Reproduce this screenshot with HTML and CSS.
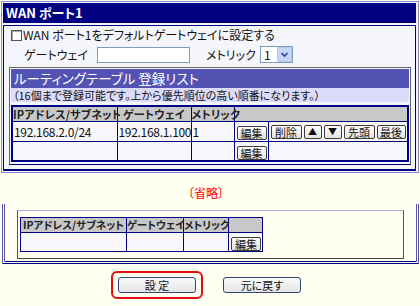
FILE: index.html
```html
<!DOCTYPE html>
<html lang="ja">
<head>
<meta charset="utf-8">
<link rel="stylesheet" href="styles.css">
</head>
<body>
<div class="frame">
  <div class="titlebar">WAN ポート1</div>
  <div class="panel">
    <div class="chkrow"><span class="cb"></span>WAN ポート1をデフォルトゲートウェイに設定する</div>
    <div class="gwrow">
      <span class="lbl">ゲートウェイ</span>
      <span class="input"></span>
      <span class="lbl2">メトリック</span>
      <span class="select"><span class="val">1</span><span class="arrow"><svg width="13" height="13" viewBox="0 0 13 13"><path d="M3.5 5 L6.5 8 L9.5 5" fill="none" stroke="#2a3f8a" stroke-width="1.6"/></svg></span></span>
    </div>
    <div class="rbox">
      <div class="rhead">ルーティングテーブル 登録リスト</div>
      <div class="rnote">（16個まで登録可能です。上から優先順位の高い順番になります。）</div>
      <table class="rt">
        <colgroup><col class="c1"><col class="c2"><col class="c3"><col class="c4"><col></colgroup>
        <tr class="hd"><th>IPアドレス/サブネット</th><th>ゲートウェイ</th><th>メトリック</th><th colspan="2"></th></tr>
        <tr class="r1"><td>192.168.2.0/24</td><td>192.168.1.100</td><td>1</td><td class="ed"><span class="btn">編集</span></td><td class="acts"><span class="btn w30">削除</span><span class="btn ar">▲</span><span class="btn ar">▼</span><span class="btn w30">先頭</span><span class="btn w28">最後</span></td></tr>
        <tr class="r2"><td></td><td></td><td></td><td class="ed"><span class="btn">編集</span></td><td></td></tr>
      </table>
    </div>
  </div>
</div>
<div class="omit">〔省略〕</div>
<div class="frame2">
  <div class="inner2">
    <table class="rt rt2">
      <colgroup><col class="d1"><col class="d2"><col class="d3"><col class="d4"></colgroup>
      <tr class="hd"><th>IPアドレス/サブネット</th><th>ゲートウェイ</th><th>メトリック</th><th></th></tr>
      <tr class="r2"><td></td><td></td><td></td><td class="ed"><span class="btn">編集</span></td></tr>
    </table>
  </div>
</div>
<div class="actions">
  <span class="hl"><span class="bbtn">設 定</span></span>
  <span class="bbtn">元に戻す</span>
</div>
</body>
</html>
```

FILE: styles.css
```css
* { box-sizing: border-box; }
html, body { margin: 0; padding: 0; }
body {
  width: 420px;
  height: 306px;
  overflow: hidden;
  background: #fffff2;
  font-family: "Noto Sans CJK JP", "Liberation Sans", sans-serif;
  font-size: 12px;
  color: #111;
  font-feature-settings: "palt";
}
.frame {
  margin: 1px 1px 0 1px;
  width: 418px;
  height: 172px;
  border: 1px solid #8a8ad0;
  background: #f5f5fc;
  padding: 1px;
  display: flex;
  flex-direction: column;
}
.titlebar {
  height: 20px;
  background: #000080;
  color: #fff;
  font-weight: bold;
  font-size: 13px;
  line-height: 20px;
  padding-left: 3px;
  margin-right: 1px;
}
.panel {
  margin-top: 2px;
  flex: 1;
  border: 1px solid #000080;
  border-bottom-width: 2px;
  margin-right: 1px;
  padding: 1px 4px 0 5px;
}
.chkrow {
  height: 16px;
  line-height: 16px;
  display: flex;
  align-items: center;
  padding-left: 2px;
}
.cb {
  width: 11px;
  height: 11px;
  border: 1px solid #555;
  background: #fff;
  box-shadow: inset 1px 1px 0 #aaa;
  margin-right: 1px;
}
.gwrow {
  margin-top: 3px;
  height: 17px;
  display: flex;
  align-items: center;
}
.lbl { margin-left: 15px; width: 73px; }
.input {
  width: 93px;
  height: 16px;
  border: 1px solid #7f9db9;
  background: #fff;
}
.lbl2 { margin-left: 16px; width: 54px; white-space: nowrap; }
.select {
  width: 33px;
  height: 17px;
  border: 1px solid #7f9db9;
  background: #fff;
  display: flex;
  align-items: center;
}
.select .val { flex: 1; padding-left: 3px; font-size: 12px; }
.arrow {
  width: 15px;
  height: 15px;
  background: #c6d5f7;
  border: 1px solid #b6c8f0;
  display: flex;
  align-items: center;
  justify-content: center;
}
.rbox {
  margin-top: 4px;
  border: 1px solid #666;
  border-bottom: 1px solid #000080;
  padding: 1px 1px 2px 1px;
  background: #f5f5fc;
}
.rhead {
  height: 19px;
  background: #5353b3;
  color: #fff;
  font-size: 13.5px;
  line-height: 19px;
  padding-left: 3px;
}
.rnote {
  height: 14px;
  background: #dcdcfa;
  font-size: 11px;
  line-height: 14px;
  padding-left: 2px;
}
.rt {
  margin-top: 3px;
  border-collapse: collapse;
  border: 2px solid #000080;
  width: 100%;
  table-layout: fixed;
  font-size: 12px;
}
.rt th, .rt td {
  border: 1px solid #000080;
  padding: 0 0 0 1px;
  text-align: left;
  white-space: nowrap;
}
.rt td { letter-spacing: -0.3px; }
.rt .hd th {
  background: #c8c8c8;
  font-weight: bold;
  height: 15px;
  font-size: 11px;
  letter-spacing: 0.2px;
  line-height: 14px;
  color: #222;
  text-align: center;
  padding: 0;
}
.c1 { width: 105px; }
.c2 { width: 74px; }
.c3 { width: 43px; }
.c4 { width: 34px; }
.rt td { background: #f8f8fc; }
.r1 td { height: 20px; }
.r2 td { height: 18px; }
.ed { padding-left: 2px !important; }
.acts { font-size: 0; padding-left: 0 !important; }
.acts .btn { margin-left: 2px; }
.btn {
  display: inline-flex;
  align-items: center;
  justify-content: center;
  vertical-align: middle;
  height: 14px;
  padding: 0 3px;
  border: 1px solid #3c3c3c;
  border-radius: 2px;
  background: linear-gradient(#ffffff, #e3e3e3);
  font-size: 11px;
  line-height: 12px;
  letter-spacing: 0;
}
.btn.w30 { width: 31px; }
.btn.w28 { width: 29px; }
.btn.ar { width: 18px; padding: 0; font-size: 9px; }
.omit {
  height: 31px;
  text-align: center;
  color: #ff0000;
  font-size: 12px;
  line-height: 16px;
  padding-top: 12px;
  padding-right: 8px;
}
.frame2 {
  margin: 0 1px 0 2px;
  height: 60px;
  border-left: 3px double #5555aa;
  border-right: 3px double #5555aa;
  border-bottom: 3px double #000080;
  padding: 6px 12px 2px 12px;
}
.inner2 {
  height: 100%;
  border-left: 1px solid #555;
  border-right: 1px solid #555;
  border-top: 1px solid #aaaadd;
  border-bottom: 1px solid #444;
  padding: 6px 2px 0 2px;
}
.rt2 { width: 243px; margin-top: 0; border-width: 1px; }
.rt2 .hd th { letter-spacing: 0; font-size: 10.5px; }
.d1 { width: 106px; }
.d2 { width: 57px; }
.d3 { width: 45px; }
.d4 { width: 34px; }
.actions {
  display: flex;
  justify-content: center;
  align-items: center;
  gap: 20px;
  padding-top: 7px;
  padding-right: 8px;
}
.hl {
  border: 2px solid #e31010;
  border-radius: 6px;
  padding: 4px 5px;
  display: inline-flex;
}
.bbtn {
  display: inline-flex;
  align-items: center;
  justify-content: center;
  width: 78px;
  height: 16px;
  border: 1px solid #33476e;
  border-radius: 3px;
  background: linear-gradient(#fafafa, #e6e6e6);
  font-size: 11px;
}
```
